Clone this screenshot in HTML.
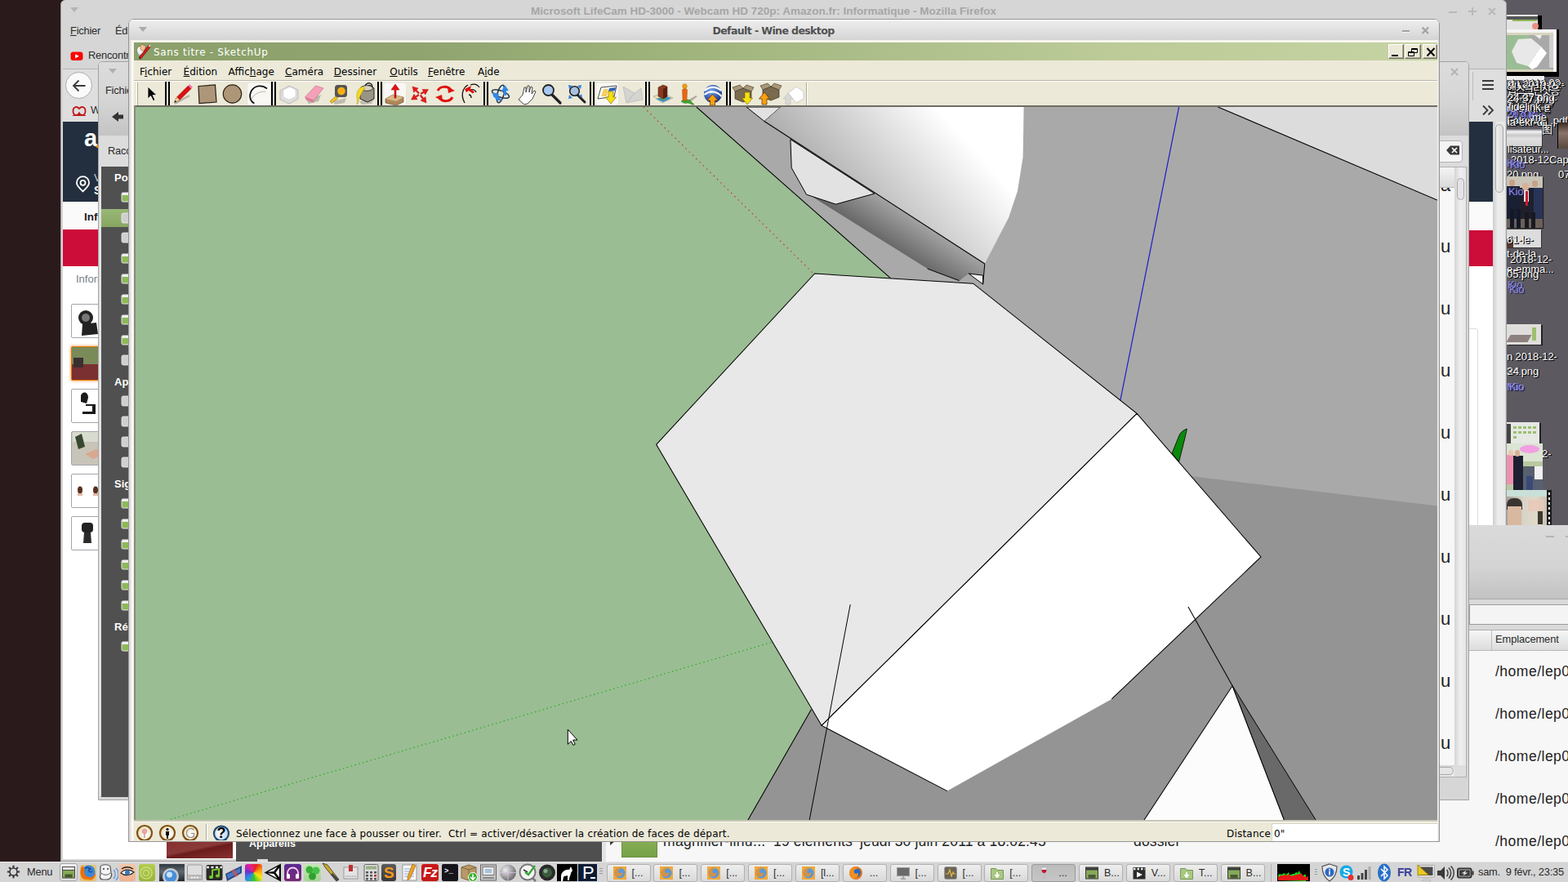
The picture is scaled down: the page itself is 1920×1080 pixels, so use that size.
<!DOCTYPE html>
<html><head><meta charset="utf-8"><title>Desktop</title>
<style>
html,body{margin:0;padding:0;}
body{width:1920px;height:1080px;overflow:hidden;position:relative;background:#2b1a1b;font-family:"Liberation Sans","DejaVu Sans","Noto Sans CJK KR","Noto Sans CJK SC",sans-serif;font-size:13px;color:#222;}
.a{position:absolute;}
.dj{font-family:"DejaVu Sans","Liberation Sans",sans-serif;}
.ui{font-family:"DejaVu Sans","Liberation Sans",sans-serif;letter-spacing:-0.4px;}
.t{position:absolute;white-space:nowrap;line-height:1;}
.pg{position:absolute;width:1920px;height:1080px;}
.dl{position:absolute;white-space:nowrap;line-height:1;font-size:13.2px;color:#fff;text-shadow:1px 1px 0 #000,1px 0 0 #000;letter-spacing:-0.2px;}
.dk{position:absolute;white-space:nowrap;line-height:1;font-size:13.2px;color:#8f8ce8;text-shadow:1px 1px 0 #1a1a40;letter-spacing:-0.2px;}
</style></head><body>

<!-- ===== right desktop ===== -->
<div class="a" id="desk" style="left:1830px;top:0;width:90px;height:660px;background:#5c5960;overflow:hidden;">
<div class="pg" style="left:-1830px;top:0">

<!-- thumbnails top -->
<div class="a" style="left:1845px;top:18px;width:38px;height:24px;background:#e4e4e4;box-shadow:5px 1px 0 #000;"></div>
<div class="a" style="left:1845px;top:20px;width:38px;height:4px;background:#555;"></div>
<div class="a" style="left:1852px;top:24px;width:30px;height:2px;background:#8fb85a;"></div>
<div class="a" style="left:1876px;top:28px;width:8px;height:8px;border-radius:50%;background:#e89080;"></div>
<div class="a" style="left:1845px;top:36px;width:58px;height:56px;background:#f4f4f4;box-shadow:6px 0 0 #000,6px 2px 0 #000;"></div>
<div class="a" style="left:1903px;top:36px;width:3px;height:56px;background:#fff;"></div>
<svg class="a" style="left:1845px;top:40px" width="57" height="48" viewBox="0 0 57 48"><rect width="57" height="48" fill="#a9a9a9"/><path d="M0 0h22l10 9v20l-8 19h-24z" fill="#9bbd93"/><path d="M14 8l16-1l12 10l-16 24l-14-4l-6-14z" fill="#e8e8e8"/><path d="M26 41l16-24l7 8l-12 17l-6 3z" fill="#fff"/><path d="M30 0h14l-3 8z" fill="#eee"/><rect x="0" y="0" width="57" height="3" fill="#d8d4c0"/><rect x="52" y="3" width="5" height="40" fill="#d0d0d0"/><rect x="0" y="45" width="57" height="3" fill="#d8d4c0"/></svg>
<div class="a" style="left:1845px;top:92px;width:46px;height:6px;background:#eee;"></div>
<div class="a" style="left:1845px;top:88px;width:64px;height:5px;background:#000;"></div>
<!-- text mess -->
<div class="dl" style="left:1844px;top:100px;color:#000;text-shadow:none;opacity:.75;">du 2019-02</div>
<div class="dl" style="left:1846px;top:108px;color:#000;text-shadow:none;opacity:.7;letter-spacing:-1px;">앱화면샷응</div>
<div class="dl" style="left:1845px;top:119px;color:#000;text-shadow:none;opacity:.7;">34-57.png</div>
<div class="dl" style="left:1846px;top:129px;color:#000;text-shadow:none;opacity:.7;">rdiqank-a</div>
<div class="dl" style="left:1846px;top:146px;color:#000;text-shadow:none;opacity:.6;">ia-ekr-dli</div>

<div class="dl" style="left:1846px;top:95px;">du 2019-02-</div>
<div class="dl" style="left:1847px;top:97px;">du 2019-02-</div>
<div class="dl" style="left:1845px;top:104px;letter-spacing:-1.5px;">앱스크린샷응</div>
<div class="dl" style="left:1845px;top:115px;">34-57.png-</div>
<div class="dl" style="left:1846px;top:113px;">24-37.png</div>
<div class="dl" style="left:1845px;top:126px;">rdiqank-a</div>
<div class="dl" style="left:1847px;top:124px;">fidelink-e</div>
<div class="dk" style="left:1845px;top:133px;">29 Kio</div>
<div class="dk" style="left:1851px;top:135px;">4,9 Kio</div>
<div class="dl" style="left:1845px;top:141px;">Fakendu .pdf</div>
<div class="dl" style="left:1846px;top:143px;">ia-ekr-dli</div>
<div class="dl" style="left:1876px;top:137px;">me</div>
<div class="a" style="left:1845px;top:155px;width:43px;height:24px;background:linear-gradient(#5c5960 0,#5c5960 10%,#f4f4f4 25%,#c8c8c8 45%,#e0e0e0 60%,#d4d4d4 100%);box-shadow:1px 1px 0 #333;"></div>
<div class="dl" style="left:1888px;top:152px;font-size:13px;">图</div>
<div class="a" style="left:1908px;top:150px;width:12px;height:32px;background:linear-gradient(#3a2a24,#8a7468 40%,#5a4a40);box-shadow:-1px 0 0 #000;"></div>
<div class="dl" style="left:1846px;top:176px;">lisateur...</div>
<div class="dl" style="left:1850px;top:189px;">2018-12</div>
<div class="dl" style="left:1897px;top:189px;">Capt</div>
<div class="dk" style="left:1845px;top:193px;">Kio</div><div class="dk" style="left:1849px;top:195px;">Kio</div>
<div class="dl" style="left:1845px;top:207px;">20.png</div>
<div class="dl" style="left:1908px;top:207px;">07</div>
<!-- men photo -->
<div class="a" style="left:1845px;top:216px;width:44px;height:63px;background:#1c2238;box-shadow:1px 1px 1px #222;overflow:hidden;">
 <div class="a" style="left:0;top:0;width:44px;height:14px;background:#c8c4b8;"></div>
 <div class="a" style="left:3px;top:4px;width:7px;height:8px;border-radius:3px;background:#c8a088;"></div>
 <div class="a" style="left:19px;top:8px;width:8px;height:9px;border-radius:3px;background:#d8b098;"></div>
 <div class="a" style="left:31px;top:5px;width:7px;height:8px;border-radius:3px;background:#c8a088;"></div>
 <div class="a" style="left:0;top:12px;width:16px;height:40px;background:#1a2034;"></div>
 <div class="a" style="left:16px;top:17px;width:16px;height:40px;background:#20202c;"></div>
 <div class="a" style="left:21px;top:17px;width:6px;height:14px;background:#e8e8e8;"></div>
 <div class="a" style="left:23px;top:18px;width:3px;height:18px;background:#c81830;"></div>
 <div class="a" style="left:33px;top:14px;width:11px;height:40px;background:#283458;"></div>
 <div class="a" style="left:0;top:52px;width:44px;height:11px;background:#6a6058;"></div>
 <div class="a" style="left:4px;top:40px;width:5px;height:23px;background:#141828;"></div><div class="a" style="left:12px;top:40px;width:5px;height:23px;background:#141828;"></div><div class="a" style="left:22px;top:44px;width:5px;height:19px;background:#181820;"></div><div class="a" style="left:30px;top:44px;width:5px;height:19px;background:#181820;"></div>
</div>
<div class="dk" style="left:1847px;top:228px;">Kio</div>
<div class="a" style="left:1845px;top:281px;width:42px;height:22px;background:#dcdcdc;box-shadow:1px 1px 0 #333;"></div>
<div class="a" style="left:1845px;top:292px;width:8px;height:11px;border-radius:0 6px 0 0;background:#5a3830;"></div>
<div class="dl" style="left:1845px;top:287px;">61-le-</div>
<div class="dl" style="left:1845px;top:304px;">t-de-la</div>
<div class="dl" style="left:1849px;top:311px;">2018-12-</div>
<div class="dl" style="left:1845px;top:323px;">e-emma...</div>
<div class="dl" style="left:1845px;top:329px;">05.png</div>
<div class="dk" style="left:1846px;top:342px;">Kio</div><div class="dk" style="left:1848px;top:348px;">Kio</div>
<div class="a" style="left:1845px;top:397px;width:42px;height:25px;background:#e0dedc;box-shadow:2px 1px 0 #222;"></div>
<div class="a" style="left:1847px;top:410px;width:26px;height:9px;background:#6a5a58;transform:skewX(-30deg);opacity:.7"></div>
<div class="a" style="left:1876px;top:401px;width:5px;height:16px;background:#9cc070;"></div>
<div class="dl" style="left:1845px;top:430px;">n 2018-12-</div>
<div class="dl" style="left:1845px;top:448px;">34.png</div><div class="dl" style="left:1846px;top:448px;opacity:.6">24</div>
<div class="dk" style="left:1845px;top:467px;">Mio</div><div class="dk" style="left:1848px;top:467px;">Kio</div>
<div class="a" style="left:1845px;top:517px;width:40px;height:27px;background:#e6e8e4;box-shadow:2px 1px 0 #222;"></div>
<div class="a" style="left:1845px;top:519px;width:5px;height:25px;background:#444;"></div>
<div class="a" style="left:1853px;top:522px;width:4px;height:3px;background:#9cc070;box-shadow:6px 0px 0 #9cc070,12px 0px 0 #9cc070,18px 0px 0 #9cc070,24px 0px 0 #9cc070,0px 6px 0 #9cc070,6px 6px 0 #9cc070,12px 6px 0 #9cc070,18px 6px 0 #9cc070,24px 6px 0 #9cc070,0px 12px 0 #9cc070;"></div>
<div class="dl" style="left:1888px;top:549px;">2-</div>
<div class="a" style="left:1845px;top:543px;width:44px;height:57px;background:#b8c8a0;overflow:hidden;">
 <div class="a" style="left:0;top:0;width:44px;height:22px;background:#dce4d4;"></div>
 <div class="a" style="left:16px;top:2px;width:24px;height:10px;border-radius:50%;background:#f0a0e0;"></div>
 <div class="a" style="left:0;top:14px;width:8px;height:36px;background:#f090b0;"></div><div class="a" style="left:2px;top:8px;width:6px;height:7px;border-radius:3px;background:#e8c8b0;"></div>
 <div class="a" style="left:8px;top:15px;width:12px;height:42px;background:#1c2030;"></div><div class="a" style="left:10px;top:8px;width:6px;height:8px;border-radius:3px;background:#d8b098;"></div>
 <div class="a" style="left:20px;top:28px;width:24px;height:29px;background:#586070;"></div>
 <div class="a" style="left:34px;top:28px;width:10px;height:16px;background:#f0f0f0;"></div>
 <div class="a" style="left:24px;top:40px;width:8px;height:17px;background:#3a4a78;"></div>
</div>
<div class="a" style="left:1845px;top:600px;width:50px;height:43px;background:linear-gradient(90deg,#a8a098,#d8d4c8 40%,#e0d8c8 70%,#c8c0b0);overflow:hidden;">
 <div class="a" style="left:0;top:0;width:50px;height:8px;background:#c8e0d8;"></div>
 <div class="a" style="left:0;top:10px;width:19px;height:14px;border-radius:8px 8px 0 0;background:#3a3430;"></div>
 <div class="a" style="left:1px;top:20px;width:17px;height:23px;background:#d8b8a0;"></div>
 <div class="a" style="left:26px;top:12px;width:20px;height:14px;background:#e8c8b8;opacity:.8"></div>
 <div class="a" style="left:38px;top:26px;width:6px;height:16px;background:#3a3a30;"></div>
</div>
<div class="a" style="left:1894px;top:600px;width:6px;height:43px;background:#1a1a1a;"></div>
<div class="a" style="left:1896px;top:603px;width:2px;height:3px;background:#eee;box-shadow:0 6px 0 #eee,0 12px 0 #eee,0 18px 0 #eee,0 24px 0 #eee,0 30px 0 #eee,0 36px 0 #eee;"></div>

</div></div>

<!-- ===== firefox ===== -->
<div class="a" id="ff" style="left:74px;top:0;width:1771px;height:1055px;background:#d6d6d6;border-radius:6px 6px 0 0;overflow:hidden;">
<div class="pg" style="left:-74px;top:0">

<svg class="a" style="left:85px;top:8px" width="12" height="8"><path d="M1 1h10L6 7z" fill="#b4b4b4"/></svg>
<div class="t" style="left:535px;top:7px;width:800px;text-align:center;font-weight:bold;font-size:13.500px;color:#a6a6a6;letter-spacing:0;">Microsoft LifeCam HD-3000 - Webcam HD 720p: Amazon.fr: Informatique - Mozilla Firefox</div>
<div class="a" style="left:1774px;top:14px;width:10px;height:2px;background:#b9b9b9;"></div>
<svg class="a" style="left:1797px;top:8px" width="12" height="12"><path d="M6 1v10M1 6h10" stroke="#b9b9b9" stroke-width="2" fill="none"/></svg>
<svg class="a" style="left:1821px;top:8px" width="12" height="12"><path d="M2 2l8 8M10 2l-8 8" stroke="#b9b9b9" stroke-width="2.200" fill="none"/></svg>
<div class="t" style="left:86px;top:32px;font-size:12.8px;color:#2a2a2a;letter-spacing:-0.2px;"><u>F</u>ichier</div>
<div class="t" style="left:141px;top:32px;font-size:12.8px;color:#2a2a2a;letter-spacing:-0.2px;">Édition</div>
<svg class="a" style="left:86px;top:63px" width="16" height="12"><rect x="0.500" y="0.500" width="15" height="10.500" rx="3" fill="#f00"/><path d="M6.200 3.200v5.200l4.600-2.600z" fill="#fff"/></svg>
<div class="t" style="left:108px;top:62px;font-size:12.8px;color:#2a2a2a;letter-spacing:-0.2px;">Rencontre</div>
<!-- nav bar -->
<div class="a" style="left:76px;top:84px;width:1768px;height:1px;background:#b4b4b4;"></div>
<div class="a" style="left:76px;top:85px;width:1768px;height:64px;background:#dedede;"></div>
<div class="a" style="left:80px;top:88px;width:33px;height:33px;box-sizing:border-box;border:1px solid #adadad;border-radius:50%;background:#fafafa;"></div>
<svg class="a" style="left:88px;top:96px" width="18" height="18"><path d="M16.500 9h-14M8.500 2.500l-6.500 6.500l6.500 6.500" stroke="#3a3a3a" stroke-width="1.800" fill="none"/></svg>
<svg class="a" style="left:88px;top:129px" width="18" height="14"><path d="M9 4.500c-2-4-7.500-3-7.500 2.500s5.500 6.500 7.500 2.500c2 4 7.500 3 7.500-2.500s-5.500-6.500-7.500-2.500" stroke="#c01818" stroke-width="1.800" fill="none"/><path d="M1 12.500h16" stroke="#c01818" stroke-width="1.200"/></svg>
<div class="t" style="left:111px;top:129px;font-size:12.8px;color:#2a2a2a;">W</div>
<div class="a" style="left:1803px;top:88px;width:1px;height:35px;background:#bcbcbc;"></div>
<svg class="a" style="left:1814px;top:96px" width="16" height="16"><path d="M1 3h14M1 8h14M1 13h14" stroke="#3a3a3a" stroke-width="2" fill="none"/></svg>
<svg class="a" style="left:1814px;top:128px" width="16" height="14"><path d="M2 1.500l5.500 5.500l-5.500 5.500M8.500 1.500l5.500 5.500l-5.500 5.500" stroke="#3a3a3a" stroke-width="1.800" fill="none"/></svg>
<!-- content -->
<div class="a" style="left:77px;top:149px;width:1751px;height:905px;background:#fff;"></div><div class="a" style="left:77px;top:247px;width:1751px;height:35px;background:#fafafa;"></div>
<div class="a" style="left:77px;top:149px;width:1751px;height:98px;background:#232f3e;"></div>
<div class="t" style="left:103px;top:155px;font-weight:bold;font-size:29px;color:#fff;">a</div><div class="a" style="left:117px;top:179px;width:6px;height:2px;background:#f90;transform:rotate(25deg);"></div>
<svg class="a" style="left:92px;top:215px" width="20" height="22"><path d="M9.500 1.200a7.600 7.600 0 0 1 7.600 7.600c0 4.200-4.200 7-7.600 10.600c-3.400-3.600-7.600-6.400-7.600-10.600a7.600 7.600 0 0 1 7.600-7.600z" fill="none" stroke="#fff" stroke-width="1.800"/><circle cx="9.500" cy="8.800" r="3" fill="none" stroke="#fff" stroke-width="1.800"/></svg>
<div class="t" style="left:115px;top:211px;font-size:13px;color:#ccc;">V</div>
<div class="t" style="left:115px;top:226px;font-weight:bold;font-size:14px;color:#fff;">S</div>
<div class="t" style="left:103px;top:259px;font-weight:bold;font-size:13.500px;color:#222;">Informatique</div>
<div class="a" style="left:77px;top:281px;width:1751px;height:45px;background:#cc0c39;"></div>
<div class="t" style="left:93px;top:335px;font-size:13px;color:#767e8a;">Informatique</div>
<!-- thumbs -->
<div class="a" style="left:87px;top:372px;width:42px;height:42px;box-sizing:border-box;border:1px solid #a2a6ac;border-radius:2px;background:#fff;"></div>
<div class="a" style="left:87px;top:424px;width:42px;height:42px;box-sizing:border-box;border:1px solid #e77600;border-radius:2px;background:#7a8a58;box-shadow:0 0 3px 1px rgba(228,121,17,.5);"></div>
<div class="a" style="left:88px;top:446px;width:40px;height:19px;background:#7a3030;"></div><div class="a" style="left:90px;top:438px;width:12px;height:12px;background:#3a3030;"></div>
<div class="a" style="left:87px;top:476px;width:42px;height:42px;box-sizing:border-box;border:1px solid #a2a6ac;border-radius:2px;background:#fff;"></div>
<div class="a" style="left:87px;top:528px;width:42px;height:42px;box-sizing:border-box;border:1px solid #a2a6ac;border-radius:2px;background:#c8c4b8;"></div>
<div class="a" style="left:87px;top:580px;width:42px;height:42px;box-sizing:border-box;border:1px solid #a2a6ac;border-radius:2px;background:#fff;"></div>
<div class="a" style="left:87px;top:632px;width:42px;height:42px;box-sizing:border-box;border:1px solid #a2a6ac;border-radius:2px;background:#fff;"></div>
<svg class="a" style="left:88px;top:373px" width="40" height="300" viewBox="88 373 40 300">
 <circle cx="105" cy="389" r="9" fill="#222"/><circle cx="105" cy="389" r="5" fill="#777"/><path d="M101 397l17-2l2 14l-20 2z" fill="#222"/>
 <path d="M99 484c3-6 9-4 9 3l-2 7l-7-2z" fill="#1a1a1a"/><path d="M105 495h12v12h-16v-3h12v-7h-8z" fill="#1a1a1a"/>
 <path d="M89 529h38v12h-38z" fill="#d8dcd0"/><path d="M92 535l8-4l4 16l-8 3z" fill="#384830"/><path d="M104 556l14-6l8 6l-12 6z" fill="#d8a890"/>
 <ellipse cx="98" cy="600" rx="3" ry="4.500" fill="#5a3020"/><ellipse cx="117" cy="600" rx="3" ry="4.500" fill="#5a3020"/><path d="M95 604h6v3h-6zM114 604h6v3h-6z" fill="#e0b8a0"/>
 <rect x="100" y="640" width="14" height="12" rx="4" fill="#222"/><path d="M103 652h8l1 13h-10z" fill="#2a2a2a"/>
</svg>
<!-- bottom red image -->
<div class="a" style="left:204px;top:1031px;width:81px;height:20px;background:linear-gradient(168deg,#873030 0%,#8a3a38 42%,#6a1c1c 52%,#7a2626 75%,#8a3030 100%);"></div>
<!-- right visible strip -->
<div class="a" style="left:1799px;top:247px;width:29px;height:35px;background:#fafafa;"></div>
<div class="a" style="left:1799px;top:402px;width:11px;height:260px;box-sizing:border-box;border:1px solid #ddd;border-left:none;border-radius:0 4px 0 0;background:#fff;"></div>
<!-- scrollbar -->
<div class="a" style="left:1828px;top:149px;width:16px;height:905px;background:linear-gradient(90deg,#cfcfcf,#ededed 40%,#e8e8e8);"></div>
<div class="a" style="left:1831px;top:152px;width:10px;height:84px;box-sizing:border-box;border:1px solid #a8a8a8;border-radius:5px;background:linear-gradient(90deg,#eee,#dcdcdc);"></div>
<div class="a" style="left:74px;top:0;width:1771px;height:1054.500px;box-sizing:border-box;border:1px solid #9c9c9c;border-top:none;border-radius:6px 6px 0 0;box-shadow:inset 2px 0 0 #d6d6d6,inset 0 -2px 0 #d6d6d6,inset -1px 0 0 #d6d6d6;"></div>

</div></div>

<!-- ===== nemo search window (bottom/right) ===== -->
<div class="a" id="srch" style="left:289px;top:643px;width:1631px;height:412px;background:#f7f7f7;overflow:hidden;">
<div class="pg" style="left:-289px;top:-643px">
<div class="a" style="left:289px;top:642px;width:1640px;height:92px;background:linear-gradient(#dadada 0%,#d4d4d4 55%,#c2c2c2 100%);border-top:1px solid #aaa;box-sizing:border-box;"></div>
<div class="a" style="left:1893px;top:656px;width:10px;height:2px;background:#b4b4b4;"></div>
<div class="a" style="left:1917px;top:656px;width:10px;height:2px;background:#b4b4b4;"></div>
<div class="a" style="left:289px;top:733px;width:1640px;height:39px;background:#d9d9d9;border-top:1px solid #a8a8a8;box-sizing:border-box;"></div>
<div class="a" style="left:1799px;top:740px;width:130px;height:25px;box-sizing:border-box;border:1px solid #9c9c9c;background:#f4f4f4;"></div>
<div class="a" style="left:1799px;top:771px;width:130px;height:26px;box-sizing:border-box;border-top:1px solid #b0b0b0;border-bottom:1px solid #b8b8b8;background:linear-gradient(#f6f6f6,#dcdcdc);"></div>
<div class="a" style="left:1826px;top:772px;width:1px;height:24px;background:#bdbdbd;"></div>
<div class="t" style="left:1831px;top:777px;font-size:12.9px;color:#2a2a2a;letter-spacing:-0.1px;">Emplacement</div>
<div class="a" style="left:1799px;top:797px;width:130px;height:260px;background:#f7f7f7;"></div>
<div id="paths" style="font-size:17.500px;color:#222;letter-spacing:0.5px;">
<div class="t" style="left:1831px;top:813.5px;">/home/lep01</div>
<div class="t" style="left:1831px;top:865.5px;">/home/lep01</div>
<div class="t" style="left:1831px;top:917.5px;">/home/lep01</div>
<div class="t" style="left:1831px;top:969.5px;">/home/lep01</div>
<div class="t" style="left:1831px;top:1021.5px;">/home/lep01</div>
</div>
<!-- bottom strip -->
<div class="a" style="left:289px;top:1020px;width:448px;height:40px;background:#4f4f4f;"></div>
<div class="a" style="left:737px;top:1020px;width:5px;height:40px;background:#e4e4e4;"></div>
<div class="a" style="left:742px;top:1020px;width:1060px;height:40px;background:#f7f7f7;"></div>
<div class="t" style="left:305px;top:1027px;font-weight:bold;font-size:12.5px;color:#fff;">Appareils</div>
<div class="a" style="left:315px;top:1052px;width:13px;height:6px;background:#ddd;"></div>
<svg class="a" style="left:746px;top:1025px" width="8" height="12"><path d="M1 0l6 5l-6 5z" fill="#333"/></svg>
<div class="a" style="left:761px;top:1020px;width:44px;height:30px;background:linear-gradient(#8db55c,#76a046);border:1px solid #6a9040;box-sizing:border-box;"></div>
<div style="font-size:17.500px;color:#222;">
<div class="t" style="left:812px;top:1022px;letter-spacing:0.35px;">magnifier-linu...</div>
<div class="t" style="left:947px;top:1022px;letter-spacing:0.15px;">19 éléments</div>
<div class="t" style="left:1053px;top:1022px;letter-spacing:0.15px;">jeudi 30 juin 2011 à 18:02:45</div>
<div class="t" style="left:1388px;top:1022px;letter-spacing:0.15px;">dossier</div>
</div>

</div></div>

<!-- ===== nemo window 2 ===== -->
<div class="a" id="nemo" style="left:120px;top:75px;width:1679px;height:905px;background:#d6d6d6;border-radius:5px 5px 0 0;overflow:hidden;">
<div class="pg" style="left:-120px;top:-75px">
<div class="a" style="left:120px;top:75px;width:1679px;height:905px;box-sizing:border-box;border:1px solid #a3a3a3;border-radius:5px 5px 0 0;"></div>
<div class="a" style="left:121px;top:76px;width:1677px;height:90px;border-radius:4px 4px 0 0;background:linear-gradient(#dcdcdc 0%,#d6d6d6 50%,#c4c4c4 100%);"></div>
<svg class="a" style="left:132px;top:83px" width="12" height="8"><path d="M1 1h10L6 7z" fill="#b0b0b0"/></svg>
<svg class="a" style="left:1775px;top:82px" width="12" height="12"><path d="M2 2l8 8M10 2l-8 8" stroke="#b4b4b4" stroke-width="2.200" fill="none"/></svg>
<div class="t" style="left:129px;top:105px;font-size:12.8px;color:#2a2a2a;letter-spacing:-0.2px;">Fichier</div>
<svg class="a" style="left:136px;top:136px" width="16" height="14"><path d="M1 7l8-6v3.500h6v5h-6v3.500z" fill="#333"/></svg>
<div class="a" style="left:121px;top:166px;width:1677px;height:38px;background:#dcdcdc;"></div>
<div class="t" style="left:132px;top:179px;font-size:12.8px;color:#2a2a2a;letter-spacing:-0.2px;">Raccourcis</div>
<!-- sidebar -->
<div class="a" style="left:124px;top:204px;width:40px;height:772px;background:#505050;"></div>
<div class="a" style="left:121px;top:204px;width:3px;height:771px;background:#e2e2e2;"></div>
<div class="a" style="left:124px;top:256px;width:40px;height:22px;background:linear-gradient(#9ab878,#86a660);"></div>
<div class="t" style="left:140px;top:211px;font-weight:bold;font-size:13px;color:#fff;">Poste</div>
<div class="t" style="left:140px;top:461px;font-weight:bold;font-size:13px;color:#fff;">Appareils</div>
<div class="t" style="left:140px;top:586px;font-weight:bold;font-size:13px;color:#fff;">Signets</div>
<div class="t" style="left:140px;top:761px;font-weight:bold;font-size:13px;color:#fff;">Réseau</div>
<svg class="a" style="left:147px;top:230px" width="12" height="580" viewBox="147 230 12 580">
 <defs><g id="fg"><rect x="149" y="0" width="10" height="11" rx="1.500" fill="#8fb85a" stroke="#e8e8e8" stroke-width="1"/><rect x="149.500" y="0" width="9" height="3" fill="#eee"/></g>
 <g id="dk"><rect x="149" y="0" width="10" height="12" rx="2" fill="#cfcfcf" stroke="#eee" stroke-width="0.800"/></g></defs>
 <use href="#fg" y="236"/><use href="#dk" y="261"/><use href="#dk" y="285"/><use href="#fg" y="311"/><use href="#fg" y="336"/><use href="#fg" y="361"/><use href="#fg" y="386"/><use href="#fg" y="411"/><use href="#dk" y="435"/>
 <use href="#dk" y="485"/><use href="#dk" y="510"/><use href="#dk" y="535"/><use href="#dk" y="560"/>
 <use href="#fg" y="611"/><use href="#fg" y="636"/><use href="#fg" y="661"/><use href="#fg" y="686"/><use href="#fg" y="711"/><use href="#fg" y="736"/><use href="#fg" y="786"/>
</svg>
<!-- right strip -->
<div class="a" style="left:1700px;top:172px;width:91px;height:27px;box-sizing:border-box;border:1px solid #b4b4b4;border-radius:4px;background:#f4f4f4;"></div>
<svg class="a" style="left:1770px;top:177px" width="18" height="14"><path d="M1 7l5-5.500h11v11h-11z" fill="#3a3a3a"/><path d="M8 4l6 6M14 4l-6 6" stroke="#fff" stroke-width="1.600"/></svg>
<div class="a" style="left:1700px;top:204px;width:96px;height:748px;box-sizing:border-box;border:1px solid #b0b0b0;background:#f7f7f7;"></div>
<div class="a" style="left:1781px;top:205px;width:14px;height:732px;background:linear-gradient(90deg,#d4d4d4,#efefef 50%,#e6e6e6);"></div>
<div class="a" style="left:1784px;top:218px;width:9px;height:27px;box-sizing:border-box;border:1px solid #a8a8a8;border-radius:5px;background:#e4e4e4;"></div>
<div class="a" style="left:1701px;top:937px;width:80px;height:14px;background:linear-gradient(#d4d4d4,#efefef 50%,#e6e6e6);"></div>
<div class="a" style="left:1720px;top:939px;width:60px;height:10px;box-sizing:border-box;border:1px solid #a8a8a8;border-radius:5px;background:#e4e4e4;"></div>
<div class="a" style="left:1781px;top:937px;width:14px;height:14px;background:#dedede;"></div>
<div id="us" class="a" style="left:1764px;top:0;width:14px;font-size:22px;color:#222;line-height:1;">
<div class="t" style="top:216px">a</div><div class="t" style="top:291px">u</div><div class="t" style="top:367px">u</div><div class="t" style="top:443px">u</div><div class="t" style="top:519px">u</div><div class="t" style="top:595px">u</div><div class="t" style="top:671px">u</div><div class="t" style="top:747px">u</div><div class="t" style="top:823px">u</div><div class="t" style="top:899px">u</div>
</div>
<div class="a" style="left:1700px;top:205px;width:81px;height:24px;border-bottom:1px solid #bbb;background:linear-gradient(#f4f4f4,#dadada);"></div>

</div></div>

<!-- ===== wine window ===== -->
<div class="a" id="wine" style="left:157px;top:23px;width:1606px;height:1008px;background:#dadada;border-radius:6px 6px 0 0;overflow:hidden;">
<div class="a" style="left:-157px;top:-23px;width:1920px;height:1080px;">
 <!-- wine frame -->
 <div class="a" style="left:157px;top:23px;width:1606px;height:1008px;box-sizing:border-box;border:1px solid #959595;border-radius:6px 6px 0 0;background:#dbdbdb;"></div>
 <div class="a" style="left:158px;top:24px;width:1604px;height:25px;border-radius:5px 5px 0 0;background:linear-gradient(#fbfbfb 0,#ececec 8%,#d4d4d4 100%);"></div>
 <svg class="a" style="left:169px;top:32px" width="12" height="8"><path d="M1 1h10L6 7z" fill="#aaa"/></svg>
 <div class="t ui" style="left:747px;top:31.5px;width:400px;text-align:center;font-weight:bold;font-size:12.5px;color:#505050;letter-spacing:-0.6px;">Default - Wine desktop</div>
 <div class="a" style="left:1717px;top:37px;width:9px;height:2px;background:#a2a2a2;box-shadow:0 1px 0 #f4f4f4;"></div>
 <svg class="a" style="left:1739px;top:31px" width="12" height="12"><path d="M2.500 2.500l7.500 7.500M10 2.500l-7.500 7.500" stroke="#a2a2a2" stroke-width="2.2" fill="none"/></svg>
 <!-- sketchup frame -->
 <div class="a" style="left:160px;top:48.500px;width:1600.500px;height:981.500px;background:#f3f1e6;"></div>
 <div class="a" style="left:162px;top:50px;width:1px;height:978px;background:#fff;"></div><div class="a" style="left:162px;top:50px;width:1597px;height:1px;background:#fff;"></div><div class="a" style="left:164px;top:52px;width:1596px;height:22px;background:linear-gradient(90deg,#8ba06a 0%,#8fa46e 22%,#a5b882 48%,#bccb98 75%,#c6d3a3 100%);"></div>
 <div class="t dj" id="sutitle" style="left:188px;top:58px;font-size:12px;color:#fff;letter-spacing:0.68px;">Sans titre - SketchUp</div>
 <!-- su icon -->
 <svg class="a" style="left:165px;top:52px" width="22" height="22" viewBox="165 52 22 22"><path d="M167.500 62c0-4 3-6 6-5.500l4 2l-1 6l-3 4l-4-1z" fill="#f4f2ee" stroke="#555" stroke-width="0.500"/><path d="M172 56.500l2-2.500l2 1.500l2.500 0.500l-1 5l-3 1.500l-2.500-2z" fill="#f4c090" stroke="#6a4a30" stroke-width="0.500"/><path d="M170.500 66l2 0.500l-1 2.500l-1.500-0.500z" fill="#9ac0c0"/><path d="M171 71.500l12.500-15.500" stroke="#4a1010" stroke-width="3.400"/><path d="M171.300 71.200l12-15" stroke="#e81818" stroke-width="2.200"/><path d="M170 73l1.200-2.500l1.200 1z" fill="#222"/><circle cx="183.300" cy="56.300" r="1.200" fill="#f8c8c0"/></svg>
 <!-- caption buttons -->
 <div class="a" style="left:1700px;top:54px;width:19px;height:18px;box-sizing:border-box;background:#ece9d8;border:1px solid;border-color:#fff #716f64 #716f64 #fff;box-shadow:inset -1px -1px 0 #aca899;"><div class="a" style="left:3px;top:12px;width:8px;height:2px;background:#000;"></div></div>
 <div class="a" style="left:1720px;top:54px;width:19.500px;height:18px;box-sizing:border-box;background:#ece9d8;border:1px solid;border-color:#fff #716f64 #716f64 #fff;box-shadow:inset -1px -1px 0 #aca899;"><svg class="a" style="left:1px;top:1px" width="16" height="15"><path d="M6.500 3.500h7v5h-7zM6.500 4.500h7" stroke="#000" fill="#ece9d8"/><path d="M2.500 7.500h7v5h-7zM2.500 8.500h7" stroke="#000" fill="#ece9d8"/></svg></div>
 <div class="a" style="left:1742px;top:54px;width:18px;height:18px;box-sizing:border-box;background:#ece9d8;border:1px solid;border-color:#fff #716f64 #716f64 #fff;box-shadow:inset -1px -1px 0 #aca899;"><svg class="a" style="left:2px;top:2px" width="14" height="13"><path d="M2.500 2l9 9.500M11.500 2l-9 9.500" stroke="#000" stroke-width="2" fill="none"/></svg></div>
 <!-- menu bar -->
 <div class="a" style="left:164px;top:74px;width:1596px;height:24px;background:#ece9d8;"></div>
 <div id="sumenu" class="dj" style="font-size:12px;color:#000;"><span class="t" style="left:171px;top:82px;">F<u>i</u>chier</span><span class="t" style="left:224.6px;top:82px;"><u>É</u>dition</span><span class="t" style="left:279.4px;top:82px;">Affic<u>h</u>age</span><span class="t" style="left:349.1px;top:82px;"><u>C</u>améra</span><span class="t" style="left:408.8px;top:82px;"><u>D</u>essiner</span><span class="t" style="left:477.2px;top:82px;"><u>O</u>utils</span><span class="t" style="left:524px;top:82px;"><u>F</u>enêtre</span><span class="t" style="left:585px;top:82px;">A<u>i</u>de</span></div>
 <div class="a" style="left:164px;top:98px;width:1596px;height:1px;background:#b8b5a4;"></div>
 <div class="a" style="left:164px;top:99px;width:1596px;height:1px;background:#fff;"></div>
 <!-- toolbar -->
 <div class="a" style="left:164px;top:100px;width:1596px;height:30px;background:#ece9d8;"></div>
 <svg class="a" style="left:164px;top:99px" width="840" height="31" viewBox="164 99 840 31">
 <defs>
  <g id="sep"><rect x="0" y="100" width="6" height="29.5" fill="#000"/><rect x="2" y="100" width="2" height="29.5" fill="#ece9d8"/></g>
  <radialGradient id="ge" cx="0.4" cy="0.35" r="0.7"><stop offset="0" stop-color="#7aa8e8"/><stop offset="1" stop-color="#10308a"/></radialGradient>
 </defs>
 <rect x="167" y="101" width="1" height="28" fill="#fff"/><rect x="168" y="101" width="1" height="28" fill="#aca899"/>
 <use href="#sep" x="202"/><use href="#sep" x="332"/><use href="#sep" x="462"/><use href="#sep" x="592"/><use href="#sep" x="722"/><use href="#sep" x="790"/><use href="#sep" x="889"/>
 <rect x="987" y="101" width="1" height="28" fill="#aca899"/><rect x="988" y="101" width="1" height="28" fill="#fff"/>
 <!-- highlighted buttons -->
 <rect x="302.500" y="101" width="29" height="28" rx="3" fill="#f8f7f3" stroke="#e0ddd0" stroke-width="0.6"/>
 <rect x="469.500" y="101" width="28" height="28" rx="3" fill="#f8f7f3" stroke="#e0ddd0" stroke-width="0.6"/>
 <rect x="729.500" y="101" width="28" height="28" rx="3" fill="#f8f7f3" stroke="#e0ddd0" stroke-width="0.6"/>
 <!-- select arrow -->
 <path d="M181 106v15l3.600-3.400l3 6l2.400-1.200l-3-5.800h5z" fill="#000" stroke="#fff" stroke-width="0.8"/>
 <!-- pencil -->
 <path d="M214 127l18-10" stroke="#b8b5a8" stroke-width="2.500"/>
 <path d="M213.500 125.500l3-6.500l14-14l3.500 3.500l-14 14z" fill="#e01010" stroke="#700" stroke-width="0.6"/>
 <path d="M213.500 125.500l3-6.500l3.500 3.500z" fill="#e8d8a0"/><path d="M213.500 125.500l1.200-2.600l1.400 1.400z" fill="#000"/>
 <path d="M230.500 105l1.800-1.800l3.500 3.500l-1.800 1.800z" fill="#f070b0"/>
 <!-- rectangle -->
 <path d="M243 105.500l20.500-1.500l1.500 21l-21 1.500z" fill="#ad9678" stroke="#2a2015" stroke-width="1.200"/>
 <!-- circle -->
 <circle cx="284.500" cy="115" r="11.200" fill="#ad9678" stroke="#2a2015" stroke-width="1.200"/>
 <!-- arc -->
 <path d="M327 108.500c-6-5-15-4-19 2.500c-4 7-1 14 3.500 15.500" fill="none" stroke="#111" stroke-width="1.800"/>
 <path d="M308 121c3-6 10-9 17-9" fill="none" stroke="#b0ada0" stroke-width="0.900"/>
 <!-- component -->
 <path d="M343 111l11-6l11 5v11l-11 6l-11-5z" fill="#ddd" stroke="#bbb" stroke-width="1"/>
 <path d="M347 110l8-3.500l7 3v9l-8 3.500l-7-3z" fill="#fff" stroke="#ccc" stroke-width="0.600"/>
 <!-- eraser -->
 <path d="M375 122l18-6l-3 8l-12 3z" fill="#bbb8aa"/>
 <path d="M373.500 119l13-14l9.500 3l-12 15z" fill="#f4a0b8" stroke="#c06080" stroke-width="0.600"/>
 <path d="M373.500 119l10.500 4l0.500 3l-10-4z" fill="#e07898"/>
 <!-- tape -->
 <path d="M408 124l16-4l-2 6l-12 2z" fill="#c0bdb0"/>
 <rect x="410" y="104" width="15" height="15" rx="3.500" fill="#555"/>
 <circle cx="418" cy="111.500" r="4.800" fill="#f5b010"/>
 <path d="M411 118l-7 6l2 2.500l8-6z" fill="#f5c020" stroke="#806010" stroke-width="0.500"/>
 <!-- bucket -->
 <path d="M440 124l18-3l-3 6l-12 1z" fill="#c0bdb0"/>
 <path d="M441 109l12-5l5 4v13l-8 4l-9-4z" fill="#9a9484" stroke="#222" stroke-width="1"/>
 <ellipse cx="449" cy="108" rx="7.500" ry="3.300" fill="#d8d4c0" stroke="#222" stroke-width="0.800"/>
 <path d="M447 105c3-5 9-4 9 2" fill="none" stroke="#222" stroke-width="1.300"/>
 <path d="M444 106c-5 2-8 7-7 14c1 3 0 6 0 8c2-2 2-6 3-8c2-5 4-9 7-12z" fill="#f5d820" stroke="#a08000" stroke-width="0.400"/>
 <!-- push pull -->
 <path d="M472 121l9-5l13 3v6l-9 4l-13-3z" fill="#b08858" stroke="#604020" stroke-width="0.600"/>
 <path d="M472 121l13 3l9-5l-13-3z" fill="#d8b888"/>
 <path d="M483 120v-10h-4l5-7l5 7h-4v10z" fill="#e81010" stroke="#800" stroke-width="0.500"/>
 <!-- move -->
 <g fill="#e81818" stroke="#900" stroke-width="0.400"><path d="M513.6 113.8L510.1 110.1L512.2 108.1L505.0 106.0L506.7 113.3L508.8 111.3L512.3 115.0z"/><path d="M515.7 115.5L519.3 113.5L520.7 116.0L524.5 109.5L517.0 109.4L518.4 111.9L514.9 114.0z"/><path d="M512.3 115.5L508.6 117.8L507.0 115.3L503.5 122.0L511.0 121.8L509.5 119.3L513.2 117.1z"/><path d="M514.2 117.2L517.3 121.4L515.0 123.1L522.0 126.0L521.1 118.5L518.8 120.3L515.6 116.1z"/></g>
 <!-- rotate -->
 <g fill="none" stroke="#e01010" stroke-width="3"><path d="M536 111c3-6 12-6 16-1"/><path d="M554 119c-3 6-12 6-16 1"/></g>
 <path d="M548 106l9 5l-8 3z" fill="#e01010"/><path d="M542 124l-9-5l8-3z" fill="#e01010"/>
 <!-- follow me -->
 <g fill="none" stroke="#111" stroke-width="1.300"><path d="M569 126c-5-9-3-18 4-22"/><path d="M576 104c5-2 9 0 11 3"/><path d="M576 110c3-1 6 0 7 3"/><path d="M574 116c2 0 3 2 3 4"/></g>
 <path d="M569 109l8-4l-1 3.500l5 4l-2 2l-5-3.500l-3 2z" fill="#e01010"/>
 <!-- orbit -->
 <g fill="none" stroke="#2a3a50" stroke-width="1.600"><ellipse cx="613" cy="115" rx="11" ry="4" transform="rotate(20 613 115)"/><ellipse cx="613" cy="115" rx="4" ry="11" transform="rotate(15 613 115)"/></g>
 <path d="M614 112l4-8l5 7l-3 0l0 6l-4-1l1-4z" fill="#3088e8"/><path d="M603 113l8 2l-1 3l5 5l-6 0l-5-5z" fill="#3088e8"/>
 <!-- pan hand -->
 <path d="M635 122l5-6l2-9l2 0l0 6l2-8l2 0l0 8l2-7l2 1l-1 8l3-4l2 1l-4 9l-6 6l-4 1z" fill="#fff" stroke="#333" stroke-width="0.900"/>
 <!-- zoom -->
 <path d="M676 116l10 10" stroke="#222" stroke-width="3.200" stroke-linecap="round"/><circle cx="671.500" cy="110.500" r="6.500" fill="#a8c8f0" stroke="#222" stroke-width="1.800"/>
 <!-- zoom extents -->
 <path d="M707 116l9 9" stroke="#222" stroke-width="3" stroke-linecap="round"/><circle cx="703.500" cy="111.500" r="5.800" fill="#a8c0e0" stroke="#222" stroke-width="1.600"/>
 <g fill="#3080e0"><path d="M696 104l5 1l-4 4z"/><path d="M712 104l-5 1l4 4z"/><path d="M696 121l1-5l4 4z"/><path d="M713 119l-1-4l-3 3z"/></g>
 <!-- get models -->
 <path d="M732 121l4-14l19-2l-3 13z" fill="#fff" stroke="#333" stroke-width="0.900"/>
 <path d="M736 118l3-9l6 0l-2 9z" fill="#f5d060"/><path d="M746 108l8-1l-1 4l-8 1z" fill="#3060b0"/>
 <path d="M745 112h6v7h3.500l-6.500 8l-6.500-8h3.500z" fill="#f5e010" stroke="#806000" stroke-width="0.600"/>
 <!-- gray share -->
 <path d="M763 106l14 8l8-6l2 14l-20 4z" fill="#d4d4d0" stroke="#bbb" stroke-width="0.800"/><path d="M777 114l-10 12" stroke="#bbb"/>
 <!-- building -->
 <path d="M800 118l12-4l12 6l-13 6z" fill="#e8e0b0" stroke="#888" stroke-width="0.500"/><path d="M803 121l9 4l10-5l-6-2z" fill="#3a90c8"/><path d="M806 120l6 3l4-2z" fill="#50a850"/>
 <path d="M806 107l6-3l5 2v12l-5 3l-6-3z" fill="#8a3a20" stroke="#401808" stroke-width="0.500"/><path d="M812 109l5-3v12l-5 3z" fill="#5a2010"/>
 <!-- person -->
 <path d="M840 124l12-7l2 1l-10 8z" fill="#b0ada0"/>
 <path d="M834 124c2-2 8-3 11-1l5 5c-3 1-6-2-8-2c-3 1-6 0-8-2z" fill="#40a830" stroke="#206010" stroke-width="0.400"/>
 <circle cx="838.500" cy="105.500" r="2.800" fill="#f0a010" stroke="#905000" stroke-width="0.400"/><path d="M835.500 110c0-2 6-2 6 0l-0.500 13h-5z" fill="#e86810" stroke="#904000" stroke-width="0.400"/>
 <!-- google earth -->
 <circle cx="873" cy="115" r="11" fill="url(#ge)"/>
 <g fill="none" stroke="#fff" stroke-width="2.200"><path d="M863 111c5-5 14-6 20 0"/><path d="M862.500 116c6-5 15-5 21 2"/></g>
 <path d="M869.500 129v-6h-3.500l6.500-7.500l6.500 7.500h-3.500v6z" fill="#f8a010" stroke="#603000" stroke-width="0.700"/>
 <!-- box down -->
 <path d="M900 112l10-4l10 4v9l-10 4l-10-4z" fill="#7a6a50" stroke="#3a3020" stroke-width="0.700"/><path d="M900 112l-3-5l9-3l4 4zM920 112l3-5l-9-3l-4 4z" fill="#a89878" stroke="#3a3020" stroke-width="0.600"/>
 <path d="M912 113h6v7h3.500l-6.500 8l-6.500-8h3.500z" fill="#f5e010" stroke="#806000" stroke-width="0.600"/>
 <!-- box up -->
 <path d="M934 110l10-4l10 4v9l-10 4l-10-4z" fill="#7a6a50" stroke="#3a3020" stroke-width="0.700"/><path d="M934 110l-3-5l9-3l4 4zM954 110l3-5l-9-3l-4 4z" fill="#a89878" stroke="#3a3020" stroke-width="0.600"/>
 <path d="M933 128v-7h-3.500l6.500-8l6.500 8h-3.500v7z" fill="#f8a010" stroke="#603000" stroke-width="0.700"/>
 <!-- gray house -->
 <path d="M965 114l10-8l9 6v9l-9 5z" fill="#fff" stroke="#ccc" stroke-width="1"/><path d="M962 128v-7h-3l6-7l6 7h-3v7z" fill="#d8d8d8" stroke="#c0c0c0" stroke-width="0.600"/>
</svg>

 <!-- viewport border -->
 <div class="a" style="left:164px;top:129px;width:1596px;height:2px;background:#6e6d64;"></div>
 <div class="a" style="left:164px;top:129px;width:2px;height:876px;background:#8a897f;"></div>
 <svg class="a" style="left:166px;top:131px" width="1594" height="873.500" viewBox="166 131 1594 873.500">
 <defs>
  <linearGradient id="gw" gradientUnits="userSpaceOnUse" x1="935.9" y1="148.5" x2="1061" y2="36"><stop offset="0" stop-color="#adadad"/><stop offset="1" stop-color="#ffffff"/></linearGradient>
  <linearGradient id="gs" gradientUnits="userSpaceOnUse" x1="993.6" y1="240.3" x2="1018" y2="202.5"><stop offset="0" stop-color="#666"/><stop offset="1" stop-color="#a2a2a2"/></linearGradient>
 </defs>
 <rect x="166" y="131" width="1594" height="875" fill="#a9a9a9"/>
 <!-- darker ground -->
 <polygon points="1000,528 1760,619.4 1760,1006 900,1006 985,868" fill="#949494"/>
 <!-- green -->
 <polygon points="166,131 852.8,131 1090.4,340.7 1090,600 993.4,868.7 914.8,1006 166,1006" fill="#9bbd93"/>
 <path d="M852.8 131L1090.4 340.7M993.4 868.7L914.8 1006" stroke="#000" stroke-width="1.05" fill="none"/>
 <!-- top right light -->
 <polygon points="1491.4,131 1760,131 1760,245" fill="#dcdcdc" />
 <path d="M1491.4 131L1760 245" stroke="#000" stroke-width="1.05"/>
 <!-- top small poly -->
 <polygon points="914,131 956,131 935.9,148.5" fill="#e2e2e2" stroke="#000" stroke-width="1"/>
 <!-- white gradient shape -->
 <polygon points="956,131 1253.6,131 1252.6,192.5 1246,233.8 1235.1,266.5 1205.8,323 935.9,148.5" fill="url(#gw)"/>
 <!-- shadow -->
 <polygon points="993.6,240.3 1023.4,250.1 1070.8,237.1 1205.8,323 1203.6,348.1 1186.2,335 1174.6,343.7 1135.7,329.1" fill="url(#gs)"/>
 <polygon points="1186.2,335 1203.6,337.2 1203.6,348.1" fill="#f0f0f0" stroke="#000" stroke-width="1"/>
 <path d="M1135.7 329.1L1174.6 343.7M1205.8 323L1203.6 348.1" stroke="#000" stroke-width="1" fill="none"/>
 <!-- small light polygon -->
 <polygon points="967.9,170.7 969.2,205.5 987.5,238.2 1023.4,250.1 1070.8,237.1" fill="#e2e2e2" stroke="#000" stroke-width="1"/>
 <path d="M935.9 148.5L1205.8 323" stroke="#000" stroke-width="1.1"/>
 <!-- axes -->
 <path d="M1443.6 131L1371.9 490" stroke="#1c1cc8" stroke-width="1.2"/>
 <path d="M788 131L996.2 335" stroke="#c83030" stroke-width="1.2" stroke-dasharray="1.5 4.5"/>
 <path d="M944.2 786.6L199.5 1006" stroke="#20b020" stroke-width="1.2" stroke-dasharray="1.5 3.5"/>
 <!-- green blade -->
 <path d="M1453.4 525.1Q1446 528 1444 533L1435.2 554.7L1443.6 565.4L1450.6 537.8Z" fill="#0a8a0a" stroke="#000" stroke-width="0.8"/>
 <!-- hexagon -->
 <polygon points="997.6,335 1191.7,347.2 1392.1,506.3 1006.1,888.4 803.6,544.3" fill="#e8e8e8" stroke="#000" stroke-width="1.05"/>
 <polygon points="1392.1,506.3 1544,682 1361.3,855.9 1159.9,968.6 1006.1,888.4" fill="#fff"/>
 <path d="M1392.1 506.3L1544 682L1361.3 855.9M1159.9 968.6L1006.1 888.4L1392.1 506.3" stroke="#000" stroke-width="1.05" fill="none"/>
 <!-- thin lines -->
 <path d="M1041.2 740.2L990.8 1006" stroke="#000" stroke-width="1"/>
 <!-- bottom triangles -->
 <polygon points="1509.1,839.8 1399.7,1006 1573.2,1006" fill="#fcfcfc" stroke="#000" stroke-width="1.05"/>
 <polygon points="1509.1,839.8 1573.2,1006 1612.4,1006" fill="#696969" stroke="#000" stroke-width="1"/>
 <path d="M1454.9 743.1L1509.1 839.8" stroke="#000" stroke-width="1.05"/>
 <!-- mouse cursor -->
 <path d="M695.3 893.2V911.3l4-3.800l2.600 5l2.300-1.200l-2.500-5.200h5.300z" fill="#fff" stroke="#000" stroke-width="1"/>
</svg>

 <!-- status bar -->
 <div class="a" style="left:164px;top:1004px;width:1596px;height:2px;background:#c9c6b6;"></div><div class="a" style="left:164px;top:1005.500px;width:1596px;height:1px;background:#fbfaf4;"></div>
 <div class="a" style="left:164px;top:1006.500px;width:1596px;height:23px;background:#ece9d8;"></div>
 <svg class="a" style="left:164px;top:1005px" width="130" height="24" viewBox="164 1005 130 24">
 <defs><radialGradient id="sb" cx="0.6" cy="0.6" r="0.6"><stop offset="0" stop-color="#fff"/><stop offset="1" stop-color="#ecdfc0"/></radialGradient><radialGradient id="sq" cx="0.4" cy="0.5" r="0.6"><stop offset="0" stop-color="#fff"/><stop offset="1" stop-color="#b8d0f0"/></radialGradient></defs><g fill="url(#sb)" stroke="#80500f" stroke-width="2.200"><circle cx="177" cy="1020" r="9"/><circle cx="205" cy="1020" r="9"/><circle cx="233" cy="1020" r="9"/></g>
 <circle cx="177" cy="1018" r="2.800" fill="#f0a8a0" stroke="#c07070" stroke-width="0.500"/><rect x="176.300" y="1020" width="1.400" height="6" fill="#d09090"/>
 <circle cx="205" cy="1015.500" r="1.600" fill="#000"/><path d="M203 1018h4v5h-1v4h-2v-4h-1z" fill="#000"/>
 <path d="M237.500 1016.500c-2-3.500-9-2.500-9 3.500c0 6 6.500 6.500 9 4v-3.500h-3.500" fill="none" stroke="#8a8880" stroke-width="1.100"/>
 <rect x="252" y="1009" width="1" height="20" fill="#aca899"/><rect x="253" y="1009" width="1" height="20" fill="#fff"/>
 <circle cx="271" cy="1020.500" r="9" fill="url(#sq)" stroke="#1c4a70" stroke-width="2.200"/>
</svg>
<div class="t" style="left:265px;top:1011px;width:12px;text-align:center;font-family:'Liberation Sans',sans-serif;font-weight:bold;font-size:18px;color:#000;">?</div>
<div class="t dj" id="sustatus" style="left:289px;top:1015px;font-size:12px;color:#000;letter-spacing:0.17px;white-space:pre;">Sélectionnez une face à pousser ou tirer.  Ctrl = activer/désactiver la création de faces de départ.</div>

<div class="t dj" style="left:1502px;top:1015px;font-size:12px;color:#000;letter-spacing:0.2px;">Distance</div>
<div class="a" style="left:1557px;top:1008px;width:203px;height:21.500px;border-left:3px solid #e4e1d2;background:#fff;border-top:1px solid #d8d5c6;border-left:1px solid #d8d5c6;box-sizing:border-box;"></div>
<div class="t dj" style="left:1560px;top:1015px;font-size:12px;color:#000;">0"</div>

</div>

</div>

<!-- ===== panel ===== -->
<div class="a" id="panel" style="left:0;top:1055px;width:1920px;height:25px;background:#d5d5d5;overflow:hidden;">
<div class="pg" style="left:0;top:-1054px">
<div class="a" style="left:0;top:1054px;width:1920px;height:1px;background:#e6e6e6;"></div>
<svg class="a" style="left:8px;top:1058px" width="17" height="17" viewBox="0 0 20 20"><g stroke="#3a3a3a" stroke-width="2.600"><path d="M10 1v18M1 10h18M3.600 3.600l12.800 12.800M16.400 3.600l-12.800 12.800"/></g><circle cx="10" cy="10" r="6.200" fill="#3a3a3a"/><circle cx="10" cy="10" r="4.300" fill="#d5d5d5"/></svg>
<div class="t" style="left:33px;top:1061px;font-size:12.8px;color:#2a2a2a;letter-spacing:-0.2px;">Menu</div>
<div class="a" style="left:73px;top:1056px;width:22px;height:22px;box-sizing:border-box;border:1px solid #a8a8a8;border-radius:3px;background:linear-gradient(#f2f2f2,#dcdcdc);"></div>
<svg class="a" style="left:76px;top:1060px" width="16" height="15"><rect x="0.500" y="0.500" width="15" height="13.500" fill="#86aa58" stroke="#4a4a4a"/><rect x="1" y="1" width="14" height="3" fill="#e4e4e4"/><rect x="1" y="4" width="14" height="1" fill="#4a4a4a"/><rect x="3.500" y="9.500" width="9" height="4" fill="#44582c"/></svg>
<svg class="a" style="left:97px;top:1056px" width="22" height="23" viewBox="0 0 22 23"><rect x="1" y="2" width="20" height="20" rx="2" fill="#f0b030" opacity="0.550"/><circle cx="11.500" cy="10.500" r="8" fill="#3a88d8"/><path d="M7 6c2-1 5-1 7 1c-2 0-3 1-2 3c1 1 3 1 4 0" fill="none" stroke="#1a4a98" stroke-width="1.400"/><path d="M4 3c-3 4-3.500 10-1 14c3 4.500 9 5.500 13 3c3-2 4.500-5 4-9c-1 4-4 6.500-8 6c-4-0.500-6-4-5.500-7c0.500-1.500 0-3.500-2.500-7z" fill="#e87010"/><path d="M5 19c3 2.500 8 2.500 11 1c-3 0.500-8 0-11-1z" fill="#f8c020"/></svg>
<svg class="a" style="left:121px;top:1056px" width="24" height="23" viewBox="0 0 24 23"><path d="M2 4c2-3 10-3 12 0l1 8c2 3-1 8-5 8h-5c-4 0-4-4-3-6z" fill="#f4f4f4" stroke="#555" stroke-width="1.200"/><path d="M3 12c3 3 8 3 11 0" stroke="#555" fill="none"/><circle cx="6" cy="7" r="1" fill="#333"/><circle cx="11" cy="7" r="1" fill="#333"/><path d="M18 8c3 3 3 8 0 11M21 6c4 4 4 11 0 15" stroke="#6a9ad8" stroke-width="1.400" fill="none"/></svg>
<div class="a" style="left:146px;top:1057px;width:20px;height:21px;border-radius:3px;background:linear-gradient(#f4c8a8,#eeb090);overflow:hidden;"><svg class="a" style="left:0;top:0" width="20" height="21"><path d="M2 11c4-5 11-5 16-1c-4 4-11 5-16 1z" fill="#fff" stroke="#222" stroke-width="1.200"/><circle cx="10" cy="10.500" r="3" fill="#3a78b8"/><path d="M3 6c4-3 9-3 14 0" stroke="#222" stroke-width="1.400" fill="none"/></svg></div>
<div class="a" style="left:170px;top:1057px;width:20px;height:21px;border-radius:3px;background:linear-gradient(#b4cc50,#98b438);overflow:hidden;"><svg class="a" style="left:0;top:0" width="20" height="21"><circle cx="9" cy="11" r="7" fill="none" stroke="#c8dc78" stroke-width="1.600"/><circle cx="9" cy="11" r="3.500" fill="none" stroke="#c8dc78" stroke-width="1.600"/></svg></div>
<div class="a" style="left:195px;top:1057px;width:31px;height:21px;border-radius:0px;background:linear-gradient(#30383f,#606870 45%,#20262c);overflow:hidden;"><svg class="a" style="left:0;top:0" width="31" height="24"><circle cx="14" cy="15" r="10" fill="#c8ccd0"/><circle cx="14" cy="15" r="7.500" fill="#4a90d8"/><circle cx="12.500" cy="13" r="3.500" fill="#c8e4fa"/></svg></div>
<svg class="a" style="left:228px;top:1056px" width="22" height="23"><rect x="1.500" y="2" width="18" height="18" rx="2" fill="#dedede" stroke="#9a9a9a"/><rect x="1.500" y="15" width="18" height="5" fill="#c4c4c4" stroke="#9a9a9a"/><path d="M6 17.500h9" stroke="#fff" stroke-width="1.400" stroke-dasharray="2 1.500"/></svg>
<svg class="a" style="left:252px;top:1056px" width="21" height="23"><rect x="0.500" y="2" width="20" height="19" rx="2" fill="#2a2a2a"/><path d="M1 5h19" stroke="#eee" stroke-width="2.500" stroke-dasharray="3 2.500"/><path d="M8 17v-8.500l8-1.500v8.500" fill="none" stroke="#78c828" stroke-width="2"/><ellipse cx="6.500" cy="17" rx="2.600" ry="2" fill="#78c828"/><ellipse cx="14.500" cy="15.500" rx="2.600" ry="2" fill="#78c828"/></svg>
<svg class="a" style="left:275px;top:1056px" width="23" height="23"><path d="M1 13l20-10v9l-18 10z" fill="#2a4a88"/><path d="M3 14l16-8v5l-15 8z" fill="#4a78c0"/><path d="M10 8l5 8" stroke="#d85050" stroke-width="4" opacity="0.700"/></svg>
<div class="a" style="left:300px;top:1057px;width:21px;height:21px;border-radius:3px;background:conic-gradient(from 20deg,#e82020,#f8a010,#f8e810,#38c828,#2890e8,#7030c8,#e020a0,#e82020);overflow:hidden;"></div>
<svg class="a" style="left:323px;top:1056px" width="23" height="23" viewBox="0 0 23 23"><path d="M0.500 11.500l20.500-11v22z" fill="#0a0a0a"/><path d="M14.500 11.500l4.300-5.800v11.600z" fill="#fff"/><path d="M12.300 10l-7.300 0.700l11.500-6.200z" fill="#fff"/><path d="M12.300 13l-7.300-0.700l11.500 6.200z" fill="#fff"/></svg>
<div class="a" style="left:348px;top:1057px;width:21px;height:21px;border-radius:3px;background:linear-gradient(#5a2a90,#7a2a78);overflow:hidden;"><svg class="a" style="left:0;top:0" width="21" height="21"><path d="M4 15v-4a6.500 6.500 0 0 1 13 0v4" fill="none" stroke="#f4d0e8" stroke-width="1.800"/><rect x="3" y="12" width="4" height="6" rx="1.500" fill="#fff"/><rect x="14" y="12" width="4" height="6" rx="1.500" fill="#fff"/></svg></div>
<div class="a" style="left:372px;top:1057px;width:21px;height:21px;border-radius:3px;background:linear-gradient(#c4e8b4,#a4d494);overflow:hidden;"><svg class="a" style="left:0;top:0" width="21" height="21"><circle cx="7" cy="7" r="4.500" fill="#38b038"/><circle cx="15" cy="8" r="4.500" fill="#48c048"/><circle cx="10.500" cy="15" r="4.500" fill="#30a030"/></svg></div>
<svg class="a" style="left:393px;top:1054px" width="26" height="26"><path d="M2 2l6 2l14 18l-3 2l-14-17z" fill="#c8a828" stroke="#333" stroke-width="0.800"/><path d="M14 14l8 8l-3 2l-7-8z" fill="#444"/></svg>
<svg class="a" style="left:420px;top:1056px" width="20" height="23"><rect x="1" y="5" width="17" height="14" fill="#e4e4e4" stroke="#999"/><rect x="7" y="2" width="5" height="8" fill="#c03030"/><path d="M3 16h13" stroke="#777" stroke-dasharray="1 1"/></svg>
<svg class="a" style="left:445px;top:1056px" width="19" height="23"><rect x="1" y="1.500" width="17" height="20" rx="1.500" fill="#ddd" stroke="#666"/><rect x="3" y="3.500" width="13" height="4" fill="#9ab088"/><g fill="#555"><rect x="3" y="10" width="3" height="2.500"/><rect x="8" y="10" width="3" height="2.500"/><rect x="13" y="10" width="3" height="2.500"/><rect x="3" y="14" width="3" height="2.500"/><rect x="8" y="14" width="3" height="2.500"/><rect x="13" y="14" width="3" height="2.500" fill="#c03030"/><rect x="3" y="18" width="3" height="2.500"/><rect x="8" y="18" width="3" height="2.500"/><rect x="13" y="18" width="3" height="2.500"/></g></svg>
<div class="a" style="left:467px;top:1057px;width:18px;height:21px;border-radius:3px;background:linear-gradient(#5a5a5a,#3a3a3a);overflow:hidden;"><div class="t" style="left:3px;top:1px;font-weight:bold;font-size:19px;color:#f89820;">S</div></div>
<svg class="a" style="left:491px;top:1056px" width="22" height="23"><rect x="2" y="2" width="17" height="19" fill="#f8f8f8" stroke="#999"/><path d="M4 7h12M4 10h12M4 13h12M4 16h12" stroke="#88a8d8"/><path d="M14 1l4 2l-7 16l-3 2l0-4z" fill="#f0a020" stroke="#805000" stroke-width="0.500"/></svg>
<div class="a" style="left:516px;top:1057px;width:21px;height:21px;border-radius:3px;background:#c81818;overflow:hidden;"><div class="t" style="left:2px;top:2px;font-weight:bold;font-style:italic;font-size:17px;color:#fff;letter-spacing:-1px;">Fz</div></div>
<div class="a" style="left:541px;top:1057px;width:20px;height:21px;border-radius:2px;background:#18141c;overflow:hidden;"><div class="t" style="left:3px;top:5px;font-family:'Liberation Mono',monospace;font-weight:bold;font-size:9px;color:#fff;">&gt;_</div></div>
<svg class="a" style="left:563px;top:1055px" width="24" height="25"><path d="M2 6l9-3l9 3v13l-9 3l-9-3z" fill="#b89868" stroke="#806838"/><path d="M2 6l9 3l9-3M11 9v13" stroke="#806838" fill="none"/><circle cx="16" cy="18" r="5.500" fill="#38b028" stroke="#fff"/><path d="M16 14.500v6M13 18l3 3l3-3" stroke="#fff" stroke-width="1.600" fill="none"/></svg>
<svg class="a" style="left:587px;top:1056px" width="22" height="23"><rect x="1.500" y="2" width="19" height="19" fill="#c8c8c8" stroke="#666"/><rect x="4" y="4.500" width="14" height="10" fill="#e8e8e8" stroke="#777"/><rect x="7" y="7" width="8" height="5" fill="#a8c0e0"/><path d="M4 18h14" stroke="#888" stroke-width="2"/></svg>
<svg class="a" style="left:611px;top:1056px" width="22" height="23"><defs><radialGradient id="sp" cx="0.350" cy="0.350" r="0.800"><stop offset="0" stop-color="#eee"/><stop offset="1" stop-color="#555"/></radialGradient></defs><circle cx="11" cy="11.500" r="10" fill="url(#sp)"/><path d="M1 11.500h20M11 1.500v20" stroke="#d8c0e8" stroke-width="0.800"/></svg>
<svg class="a" style="left:635px;top:1055px" width="24" height="25"><circle cx="11" cy="12" r="9.500" fill="#f4f4f4" stroke="#777" stroke-width="2"/><path d="M11 12l-5-3" stroke="#333" stroke-width="1.600"/><path d="M8 12l4 3l8-11" stroke="#38a838" stroke-width="2.400" fill="none"/><path d="M17 19l4 4" stroke="#777" stroke-width="2.500"/></svg>
<svg class="a" style="left:659px;top:1056px" width="22" height="23"><circle cx="11" cy="11.500" r="10" fill="#2a2a2a"/><circle cx="11" cy="11.500" r="6" fill="#3a5a3a"/><circle cx="9" cy="9.500" r="2.500" fill="#88a890"/></svg>
<div class="a" style="left:682px;top:1057px;width:25px;height:21px;border-radius:0px;background:#000;overflow:hidden;"><svg class="a" style="left:0;top:0" width="25" height="22"><path d="M5 14c1-5 6-8 10-7l2-4l2 5l-2 3c0 3-2 4-2 9h-2l0-6c-2 1-4 0-5 2l-1 5h-2z" fill="#fff"/></svg></div>
<div class="a" style="left:708px;top:1057px;width:23px;height:21px;border-radius:0px;background:#0c1c34;overflow:hidden;"><div class="t" style="left:5px;top:0;font-size:22px;color:#fff;">P</div><div class="a" style="left:15px;top:16px;width:6px;height:2px;background:#fff;"></div></div>
<div class="a" style="left:734px;top:1062px;width:4px;height:1px;background:#999;box-shadow:0 3px 0 #999,0 6px 0 #999;"></div>
<div class="a" style="left:742.5px;top:1057px;width:54px;height:22px;box-sizing:border-box;border:1px solid #b0b0b0;border-radius:3px;background:linear-gradient(#eeeeee,#d9d9d9);"><div class="a" style="left:6px;top:1px;width:18px;height:18px;"><svg width="18" height="18" viewBox="0 0 18 18"><rect x="1" y="1" width="16" height="16" fill="#f0a838"/><circle cx="9" cy="9" r="6.500" fill="#5a98d8"/><path d="M2.500 7c2-4 6-5 9-3c-3 0-5 2-4 4c1 2 4 1 5 0c0 4-3 6-6 5.500c-3-0.500-5-3.500-4-6.500z" fill="#e89030" opacity="0.850"/></svg></div><div class="t" style="left:30px;top:4px;font-size:12.500px;color:#2a2a2a;">[...</div></div>
<div class="a" style="left:800.4px;top:1057px;width:54px;height:22px;box-sizing:border-box;border:1px solid #b0b0b0;border-radius:3px;background:linear-gradient(#eeeeee,#d9d9d9);"><div class="a" style="left:6px;top:1px;width:18px;height:18px;"><svg width="18" height="18" viewBox="0 0 18 18"><rect x="1" y="1" width="16" height="16" fill="#f0a838"/><circle cx="9" cy="9" r="6.500" fill="#5a98d8"/><path d="M2.500 7c2-4 6-5 9-3c-3 0-5 2-4 4c1 2 4 1 5 0c0 4-3 6-6 5.500c-3-0.500-5-3.500-4-6.500z" fill="#e89030" opacity="0.850"/></svg></div><div class="t" style="left:30px;top:4px;font-size:12.500px;color:#2a2a2a;">[...</div></div>
<div class="a" style="left:858.2px;top:1057px;width:54px;height:22px;box-sizing:border-box;border:1px solid #b0b0b0;border-radius:3px;background:linear-gradient(#eeeeee,#d9d9d9);"><div class="a" style="left:6px;top:1px;width:18px;height:18px;"><svg width="18" height="18" viewBox="0 0 18 18"><rect x="1" y="1" width="16" height="16" fill="#f0a838"/><circle cx="9" cy="9" r="6.500" fill="#5a98d8"/><path d="M2.500 7c2-4 6-5 9-3c-3 0-5 2-4 4c1 2 4 1 5 0c0 4-3 6-6 5.500c-3-0.500-5-3.500-4-6.500z" fill="#e89030" opacity="0.850"/></svg></div><div class="t" style="left:30px;top:4px;font-size:12.500px;color:#2a2a2a;">[...</div></div>
<div class="a" style="left:916.0px;top:1057px;width:54px;height:22px;box-sizing:border-box;border:1px solid #b0b0b0;border-radius:3px;background:linear-gradient(#eeeeee,#d9d9d9);"><div class="a" style="left:6px;top:1px;width:18px;height:18px;"><svg width="18" height="18" viewBox="0 0 18 18"><rect x="1" y="1" width="16" height="16" fill="#f0a838"/><circle cx="9" cy="9" r="6.500" fill="#5a98d8"/><path d="M2.500 7c2-4 6-5 9-3c-3 0-5 2-4 4c1 2 4 1 5 0c0 4-3 6-6 5.500c-3-0.500-5-3.500-4-6.500z" fill="#e89030" opacity="0.850"/></svg></div><div class="t" style="left:30px;top:4px;font-size:12.500px;color:#2a2a2a;">[...</div></div>
<div class="a" style="left:973.9px;top:1057px;width:54px;height:22px;box-sizing:border-box;border:1px solid #b0b0b0;border-radius:3px;background:linear-gradient(#eeeeee,#d9d9d9);"><div class="a" style="left:6px;top:1px;width:18px;height:18px;"><svg width="18" height="18" viewBox="0 0 18 18"><rect x="1" y="1" width="16" height="16" fill="#f0a838"/><circle cx="9" cy="9" r="6.500" fill="#5a98d8"/><path d="M2.500 7c2-4 6-5 9-3c-3 0-5 2-4 4c1 2 4 1 5 0c0 4-3 6-6 5.500c-3-0.500-5-3.500-4-6.500z" fill="#e89030" opacity="0.850"/></svg></div><div class="t" style="left:30px;top:4px;font-size:12.500px;color:#2a2a2a;">[l...</div></div>
<div class="a" style="left:1031.8px;top:1057px;width:54px;height:22px;box-sizing:border-box;border:1px solid #b0b0b0;border-radius:3px;background:linear-gradient(#eeeeee,#d9d9d9);"><div class="a" style="left:6px;top:1px;width:18px;height:18px;"><svg width="18" height="18" viewBox="0 0 18 18"><circle cx="9" cy="9" r="8" fill="#e87818"/><circle cx="9.500" cy="8.500" r="5.500" fill="#2a68c0"/><path d="M1.500 7c2-5 7-6 10-3c-4 0-5.500 2-4.500 4.500c1 2 4 1.500 5 0c0.500 5-3 7.500-6.500 7c-3-0.500-5-4-4-8.500z" fill="#f09020"/></svg></div><div class="t" style="left:32px;top:4px;font-size:12.500px;color:#2a2a2a;">...</div></div>
<div class="a" style="left:1089.6px;top:1057px;width:54px;height:22px;box-sizing:border-box;border:1px solid #b0b0b0;border-radius:3px;background:linear-gradient(#eeeeee,#d9d9d9);"><div class="a" style="left:6px;top:1px;width:18px;height:18px;"><svg width="18" height="18"><rect x="1.500" y="2.500" width="15" height="10" fill="#6a6a6a" stroke="#999"/><path d="M6 16h6M9 13v3" stroke="#999" stroke-width="1.500"/></svg></div><div class="t" style="left:30px;top:4px;font-size:12.500px;color:#2a2a2a;">[...</div></div>
<div class="a" style="left:1147.5px;top:1057px;width:54px;height:22px;box-sizing:border-box;border:1px solid #b0b0b0;border-radius:3px;background:linear-gradient(#eeeeee,#d9d9d9);"><div class="a" style="left:6px;top:1px;width:18px;height:18px;"><svg width="18" height="18"><rect x="1.500" y="1.500" width="15" height="15" rx="2" fill="#6a6458" stroke="#999"/><path d="M3 10h3l2-5l2 8l2-5l1 2h2" stroke="#e8b838" fill="none" stroke-width="1.200"/></svg></div><div class="t" style="left:30px;top:4px;font-size:12.500px;color:#2a2a2a;">[...</div></div>
<div class="a" style="left:1205.3px;top:1057px;width:54px;height:22px;box-sizing:border-box;border:1px solid #b0b0b0;border-radius:3px;background:linear-gradient(#eeeeee,#d9d9d9);"><div class="a" style="left:6px;top:1px;width:18px;height:18px;"><svg width="18" height="18"><path d="M1.500 3.500h6l1.500 2h7.500v11h-15z" fill="#a8c880" stroke="#789858"/><path d="M9 8v5M6.500 11l2.500 3l2.500-3" stroke="#fff" stroke-width="1.800" fill="none"/></svg></div><div class="t" style="left:30px;top:4px;font-size:12.500px;color:#2a2a2a;">[...</div></div>
<div class="a" style="left:1263.2px;top:1057px;width:54px;height:22px;box-sizing:border-box;border:1px solid #999;border-radius:3px;background:linear-gradient(#bcbcbc,#c6c6c6);"><div class="a" style="left:6px;top:1px;width:18px;height:18px;"><svg width="18" height="18"><path d="M5.500 2h6c0.500 4-0.500 7-3 7s-3.500-3-3-7z" fill="#e8e8f0" stroke="#aaa" stroke-width="0.600"/><path d="M5.600 5h5.800c0 2.500-1 4-2.900 4s-2.900-1.500-2.900-4z" fill="#c01828"/><path d="M8.500 9v6M6 15.500h5" stroke="#bbb" stroke-width="1.200"/></svg></div><div class="t" style="left:32px;top:4px;font-size:12.500px;color:#2a2a2a;">...</div></div>
<div class="a" style="left:1321.0px;top:1057px;width:54px;height:22px;box-sizing:border-box;border:1px solid #b0b0b0;border-radius:3px;background:linear-gradient(#eeeeee,#d9d9d9);"><div class="a" style="left:6px;top:1px;width:18px;height:18px;"><svg width="18" height="18"><rect x="1.500" y="2" width="15" height="14" fill="#86aa58" stroke="#3a3a3a"/><rect x="2" y="2.500" width="14" height="3" fill="#3a3a3a"/><rect x="4.500" y="11" width="9" height="4.500" fill="#4a5a38"/></svg></div><div class="t" style="left:30px;top:4px;font-size:12.500px;color:#2a2a2a;">B...</div></div>
<div class="a" style="left:1378.8px;top:1057px;width:54px;height:22px;box-sizing:border-box;border:1px solid #b0b0b0;border-radius:3px;background:linear-gradient(#eeeeee,#d9d9d9);"><div class="a" style="left:6px;top:1px;width:18px;height:18px;"><svg width="18" height="18"><rect x="1.500" y="2" width="15" height="14.500" fill="#2a2a2a"/><path d="M2 4h14" stroke="#eee" stroke-width="2.400" stroke-dasharray="2.500 2"/><path d="M6 7.500v7l7-3.500z" fill="#fff"/></svg></div><div class="t" style="left:30px;top:4px;font-size:12.500px;color:#2a2a2a;">V...</div></div>
<div class="a" style="left:1436.7px;top:1057px;width:54px;height:22px;box-sizing:border-box;border:1px solid #b0b0b0;border-radius:3px;background:linear-gradient(#eeeeee,#d9d9d9);"><div class="a" style="left:6px;top:1px;width:18px;height:18px;"><svg width="18" height="18"><path d="M1.500 3.500h6l1.500 2h7.500v11h-15z" fill="#a8c880" stroke="#789858"/><path d="M9 8v5M6.500 11l2.500 3l2.500-3" stroke="#fff" stroke-width="1.800" fill="none"/></svg></div><div class="t" style="left:30px;top:4px;font-size:12.500px;color:#2a2a2a;">T...</div></div>
<div class="a" style="left:1494.6px;top:1057px;width:54px;height:22px;box-sizing:border-box;border:1px solid #b0b0b0;border-radius:3px;background:linear-gradient(#eeeeee,#d9d9d9);"><div class="a" style="left:6px;top:1px;width:18px;height:18px;"><svg width="18" height="18"><rect x="1.500" y="2" width="15" height="14" fill="#86aa58" stroke="#3a3a3a"/><rect x="2" y="2.500" width="14" height="3" fill="#3a3a3a"/><rect x="4.500" y="11" width="9" height="4.500" fill="#4a5a38"/></svg></div><div class="t" style="left:30px;top:4px;font-size:12.500px;color:#2a2a2a;">B...</div></div>
<div class="a" style="left:1556px;top:1057px;width:1px;height:22px;background:#b4b4b4;"></div>
<svg class="a" style="left:1564px;top:1056.5px" width="40" height="21"><rect width="40" height="21" fill="#000"/><path d="M1 20v-6l2-2l2 1l2-1l2-1l1 2l2-1l2-2l1 3l2 0l2-1l2 0l2-2l2 1l2-3l1 3l2 1l1 3l2-2l2 0v8z" fill="#18d818"/><path d="M1 20v-4l3-2l3 0l3-1l2 1l3-2l2 3l3-1l4-1l3-1l3 0l2 3l3 1l3-1v5z" fill="#e81818"/></svg>
<div class="a" style="left:1610px;top:1063px;width:3px;height:1px;background:#999;box-shadow:0 3px 0 #999,0 6px 0 #999;"></div>
<svg class="a" style="left:1617px;top:1056px" width="22" height="23"><path d="M11 1l9 3c0 8-3 14-9 18c-6-4-9-10-9-18z" fill="#e8e8e8" stroke="#555" stroke-width="1.200"/><circle cx="11" cy="11" r="5.500" fill="#2a68c8"/><rect x="10.200" y="9.500" width="1.600" height="5" fill="#fff"/><circle cx="11" cy="7.800" r="1" fill="#fff"/></svg>
<svg class="a" style="left:1640px;top:1057px" width="20" height="22"><circle cx="8.500" cy="9.500" r="8" fill="#18a8e8"/><text x="4" y="15" font-family="Liberation Sans,sans-serif" font-weight="bold" font-size="14" fill="#fff">S</text><circle cx="14" cy="16.500" r="3.500" fill="#e83030"/></svg>
<svg class="a" style="left:1661px;top:1059px" width="18" height="18"><rect x="1" y="12" width="3" height="5" fill="#444"/><rect x="5.500" y="9" width="3" height="8" fill="#444"/><rect x="10" y="5" width="3" height="12" fill="#444"/><rect x="14.500" y="1" width="3" height="16" fill="#aaa"/></svg>
<svg class="a" style="left:1686px;top:1056px" width="18" height="23"><ellipse cx="9" cy="11.500" rx="8" ry="11" fill="#2870c8"/><path d="M5 7l8 8l-4 4v-15l4 4l-8 8" stroke="#fff" stroke-width="1.500" fill="none"/></svg>
<div class="t" style="left:1711px;top:1060px;font-weight:bold;font-size:14px;color:#38409a;letter-spacing:-0.5px;">FR</div>
<svg class="a" style="left:1734px;top:1057px" width="24" height="23"><rect x="2.500" y="1.500" width="20" height="14.500" rx="1" fill="#ececec" stroke="#999" stroke-width="0.800"/><rect x="4.500" y="3.500" width="16" height="10.500" fill="#4a4a4a"/><path d="M7 20.500h11l-2-2h-7z" fill="#e4e4e4" stroke="#999" stroke-width="0.600"/><path d="M2 1l13.500 12.500h-13.500z" fill="#e8c820" stroke="#8a6a00" stroke-width="0.700"/></svg>
<svg class="a" style="left:1759px;top:1058px" width="22" height="20"><path d="M1 7h4l5-5v16l-5-5h-4z" fill="#3a3a3a"/><path d="M12.500 6c2 2 2 6 0 8M15 3.500c3.500 3.500 3.500 9.500 0 13M17.500 1.500c5 5 5 12 0 17" stroke="#3a3a3a" stroke-width="1.500" fill="none"/></svg>
<svg class="a" style="left:1784px;top:1061px" width="21" height="15"><rect x="1" y="1.500" width="16.500" height="11" rx="2" fill="#d5d5d5" stroke="#333" stroke-width="2"/><rect x="2.800" y="3.300" width="13" height="7.400" fill="#3a3a3a"/><rect x="18.500" y="4.500" width="2" height="5" fill="#333"/><path d="M11.500 3.800l-6 3.600h3.500l-1.500 2.800l6-3.600h-3.500z" fill="#e8e8e8"/></svg>
<div class="t" style="left:1810px;top:1061px;font-size:12.8px;color:#2a2a2a;letter-spacing:-0.2px;white-space:pre;">sam.  9 févr., 23:35</div>
</div></div>

</body></html>
